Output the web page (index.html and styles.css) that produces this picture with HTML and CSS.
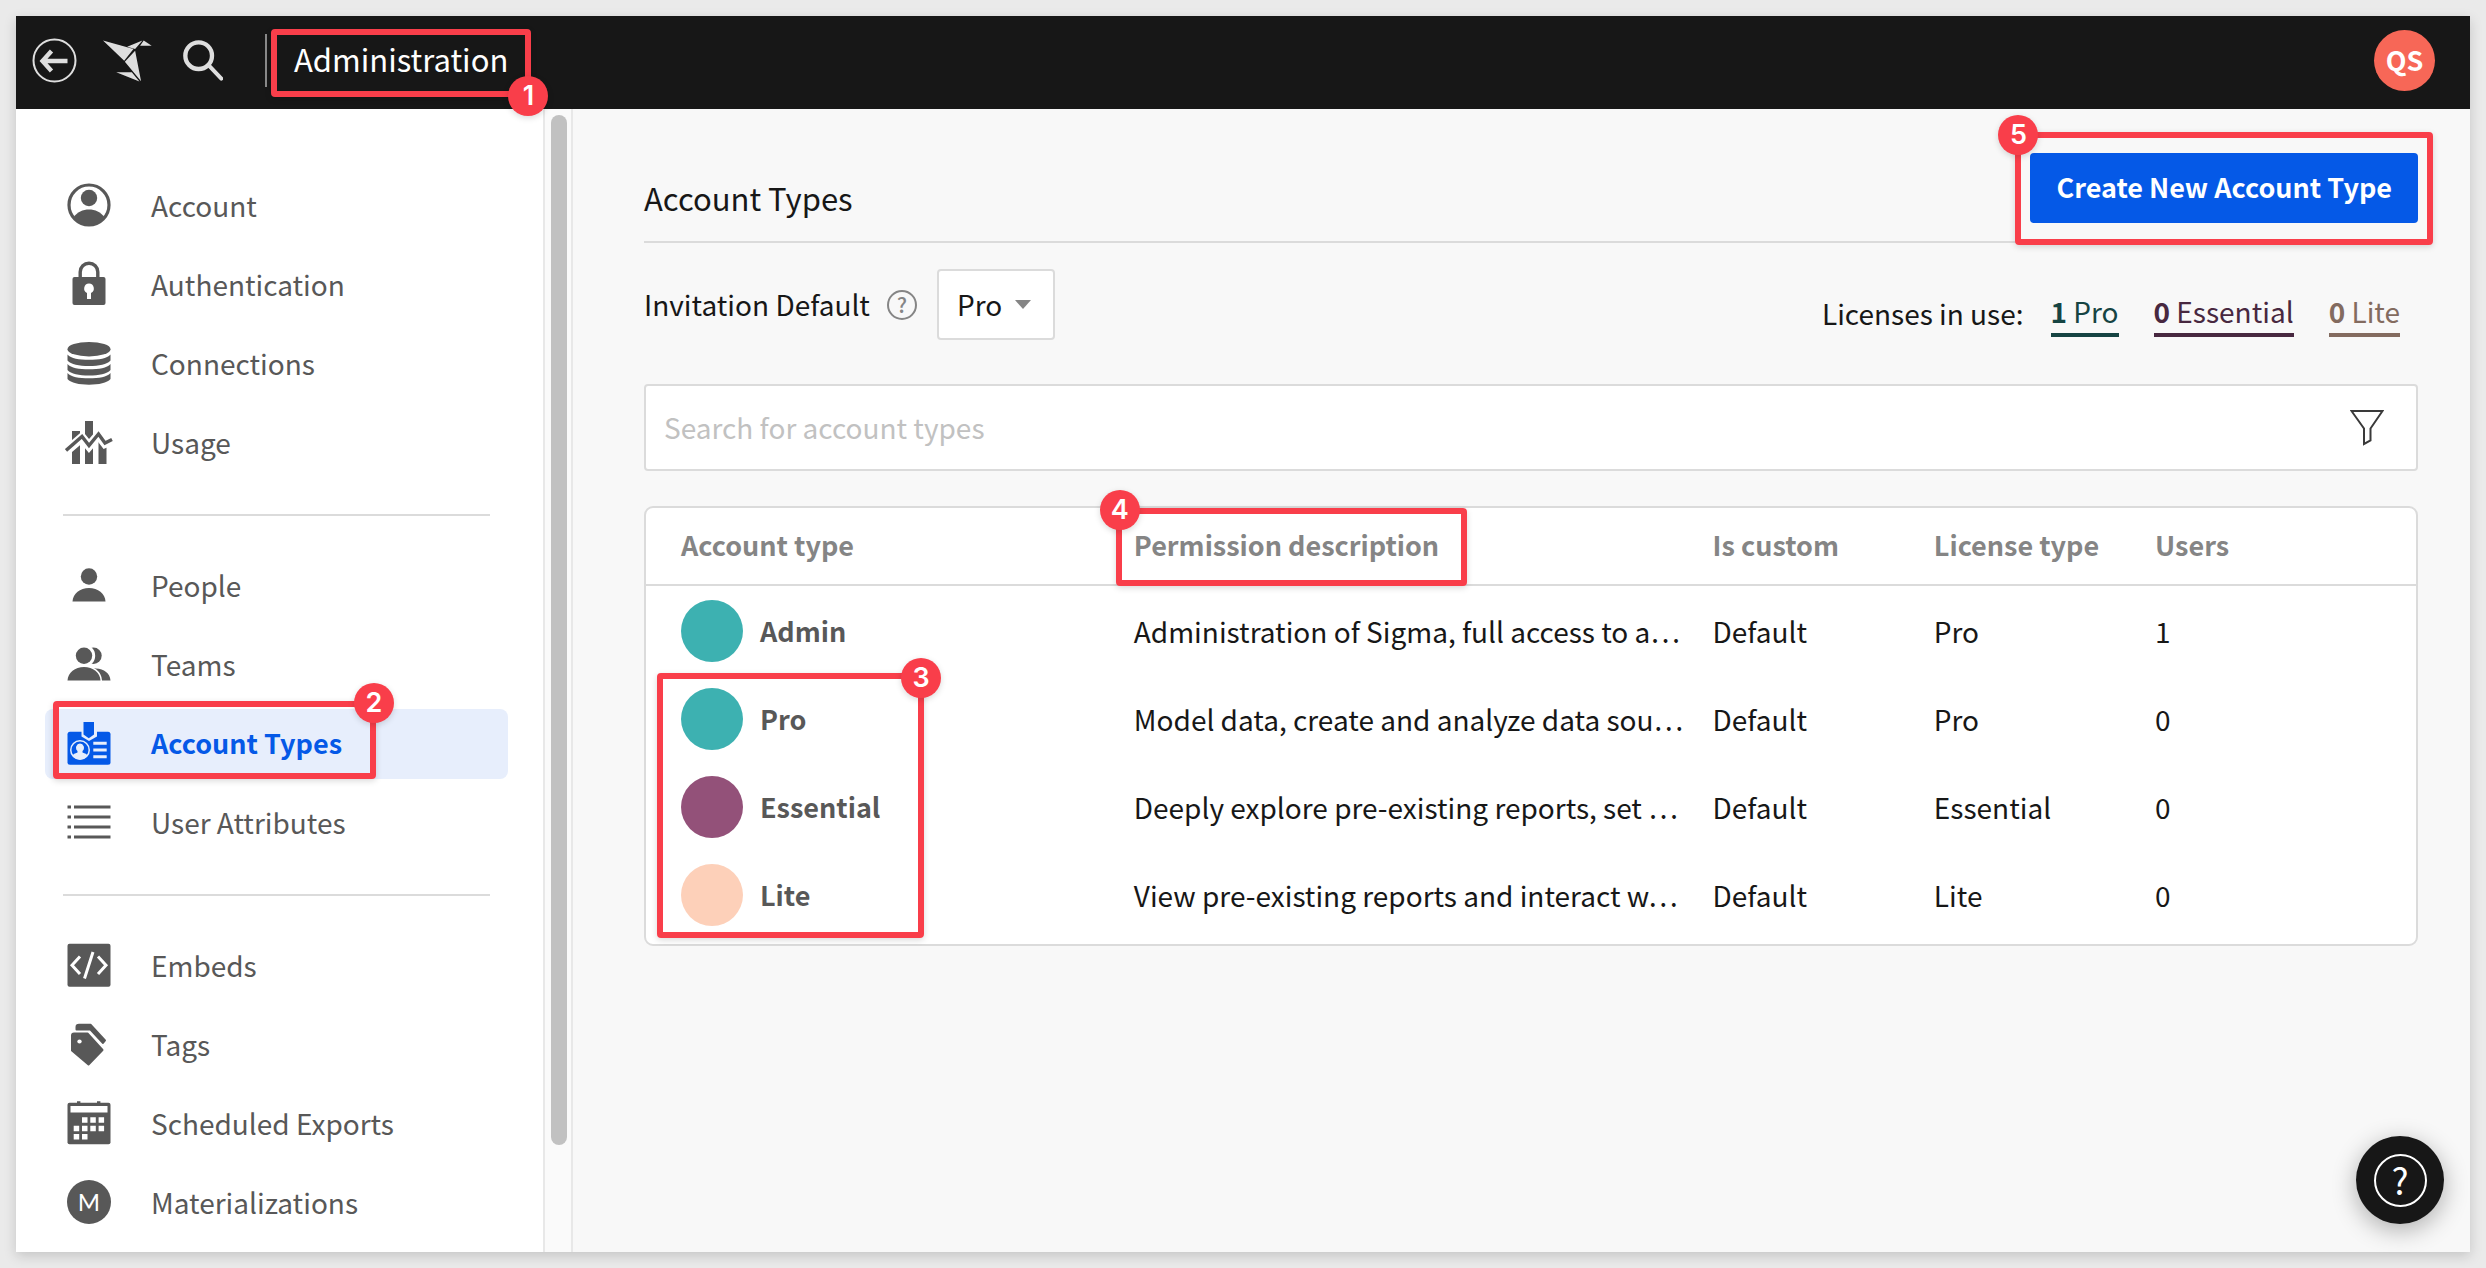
FILE: index.html
```html
<!DOCTYPE html>
<html lang="en">
<head>
<meta charset="utf-8">
<title>Account Types - Administration</title>
<link rel="stylesheet" href="styles.css">
</head>
<body>
<div class="app">
  <header class="topbar">
    <button class="icon-button back" aria-label="Back">
      <svg width="45" height="45" viewBox="0 0 45 45" fill="none" stroke="currentColor"><circle cx="22.5" cy="22.5" r="21" stroke-width="2"/><path d="M35.5 23H11M19.5 13L10.5 23 19.5 33" stroke-width="4.4"/></svg>
    </button>
    <a class="logo" href="#" aria-label="Home">
      <svg width="49" height="42" viewBox="24 30 148 126" fill="currentColor"><path d="M24 31L116 57 88 92zM97 50L143 31 121 57zM147 31L171 47 136 47zM121 62L139 154 90 95zM64 127L111 127 134 155z"/></svg>
    </a>
    <button class="icon-button search-button" aria-label="Search">
      <svg width="40" height="41" viewBox="264 30 120 123" fill="none" stroke="currentColor"><circle cx="311" cy="77" r="40" stroke-width="13"/><path d="M342 107L379 146" stroke-width="12" stroke-linecap="round"/></svg>
    </button>
    <div class="section-title">Administration
      <span class="callout callout-1"><span class="badge">1</span></span>
    </div>
    <button class="avatar">QS</button>
  </header>

  <div class="body">
    <nav class="sidebar" aria-label="Administration">
      <div class="nav-scroll">
        <ul class="nav-group">
          <li><a class="nav-item" href="#"><svg class="nav-icon" viewBox="0 0 48 48" fill="currentColor"><circle cx="24" cy="24" r="20" fill="none" stroke="currentColor" stroke-width="3.2"/><circle cx="24" cy="17" r="8.2"/><path d="M8.500 36.500C12 31 18 28.500 24 28.500S36 31 39.500 36.500A20 20 0 0 1 8.500 36.500Z"/></svg>Account</a></li>
          <li><a class="nav-item" href="#"><svg class="nav-icon" viewBox="0 0 48 48" fill="currentColor"><path d="M15.200 18V12a8.800 8.800 0 0 1 17.600 0V18" fill="none" stroke="currentColor" stroke-width="3.400"/><rect x="7.500" y="17" width="33" height="28" rx="2"/><path class="knockout" d="M24 23.500a5 5 0 0 0-2 9.500v6h4v-6a5 5 0 0 0-2-9.500z"/></svg>Authentication</a></li>
          <li><a class="nav-item" href="#"><svg class="nav-icon" viewBox="0 0 48 48" fill="currentColor"><ellipse cx="24" cy="10.200" rx="21.500" ry="7.200"/><path d="M2.500 15.500C6 19.500 14 20.800 24 20.800S42 19.500 45.500 15.500V21.500C42 25.500 34 27 24 27S6 25.500 2.500 21.500ZM2.500 25C6 29 14 30.300 24 30.300S42 29 45.500 25V31C42 35 34 36.500 24 36.500S6 35 2.500 31ZM2.500 34C6 38 14 39.300 24 39.300S42 38 45.500 34V40C42 44 34 45.700 24 45.700S6 44 2.500 40Z"/></svg>Connections</a></li>
          <li><a class="nav-item" href="#"><svg class="nav-icon" viewBox="0 0 48 48" fill="currentColor"><path d="M7 13h8v33H7zM20 3h8v43h-8zM33.500 20h8v26h-8z"/><path class="knockout-line" d="M0 34L17 19.500 24 28 33.500 17 40 25.500 48 22" stroke-width="9"/><path d="M1 32.500L17 18.500 24 27.500 33.500 16 40 25 47 21.500" fill="none" stroke="currentColor" stroke-width="3.400"/></svg>Usage</a></li>
        </ul>
        <hr class="nav-divider">
        <ul class="nav-group">
          <li><a class="nav-item" href="#"><svg class="nav-icon" viewBox="0 0 48 48" fill="currentColor"><circle cx="24" cy="15.500" r="8.200"/><path d="M7.500 40.500C8 32.500 15 27 24 27S40 32.500 40.500 40.500Z"/></svg>People</a></li>
          <li><a class="nav-item" href="#"><svg class="nav-icon" viewBox="0 0 48 48" fill="currentColor"><circle cx="28.500" cy="15.700" r="8.200"/><path d="M20 40.500C20 32 24 27 31 28.500C39 29 45 33 45.500 40.500Z"/><g class="knockout-edge"><circle cx="19" cy="15.700" r="9.700"/><path d="M2.500 40.500C3 32.500 10 27 19 27S35 32.500 35.500 40.500Z"/></g><circle cx="19" cy="15.700" r="8.200"/><path d="M2.500 40.500C3 32.500 10 27 19 27S35 32.500 35.500 40.500Z"/></svg>Teams</a></li>
          <li><a class="nav-item active" href="#" aria-current="page"><svg class="nav-icon" viewBox="0 0 48 48" fill="currentColor"><rect x="2.500" y="12.700" width="43" height="33" rx="2.500"/><path class="knockout" d="M16.500 12h15.500v5.500l-8 4.500-7.500-4.500z"/><path d="M18.500 3h10.500v12.500l-5.200 3.800-5.300-3.800z"/><circle class="knockout" cx="15" cy="31" r="10"/><circle cx="15" cy="31" r="8.500"/><path class="knockout" d="M15 24.500a4 4.300 0 0 1 2.500 7.600v1.400c2.500.8 4.500 1.800 5 3.200A9.500 9.500 0 0 1 7.500 36.700c.5-1.400 2.500-2.400 5-3.200v-1.400A4 4.300 0 0 1 15 24.500zM28.300 22.800h13.400v3H28.300zM28.300 29.500h13.400v3H28.300zM28.300 36.200h13.400v3H28.300z"/></svg>Account Types<span class="callout callout-2"><span class="badge">2</span></span></a></li>
          <li><a class="nav-item" href="#"><svg class="nav-icon" viewBox="0 0 48 48" fill="none" stroke="currentColor" stroke-width="3"><path d="M2.500 9h3.500M9 9h36.500M2.500 19h3.500M9 19h36.500M2.500 29h3.500M9 29h36.500M2.500 39h3.500M9 39h36.500"/></svg>User Attributes</a></li>
        </ul>
        <hr class="nav-divider">
        <ul class="nav-group">
          <li><a class="nav-item" href="#"><svg class="nav-icon" viewBox="0 0 48 48" fill="currentColor"><rect x="2.500" y="2.700" width="43" height="43" rx="2"/><path class="knockout-line" d="M15 15.500L7 24.200 15 33M33 15.500L41 24.200 33 33M28 11L19.500 37.500" stroke-width="3"/></svg>Embeds</a></li>
          <li><a class="nav-item" href="#"><svg class="nav-icon" viewBox="0 0 48 48" fill="currentColor" stroke="currentColor" stroke-width="2" stroke-linejoin="round"><path d="M7 15.500Q7 13.500 9 13.500H22.500L37.500 30 23.500 44.500 7 30.500zM11.500 9.500V7Q11.500 4.700 14 4.700H25.500L40 20.500 38 23 25.500 9.500z"/><ellipse class="knockout" cx="14.500" cy="21.500" rx="2.200" ry="2" stroke="none"/></svg>Tags</a></li>
          <li><a class="nav-item" href="#"><svg class="nav-icon" viewBox="0 0 48 48" fill="currentColor"><path d="M12 2.200h3.400v2H12zM32 2.200h3.400v2H32z"/><rect x="2.500" y="3.700" width="43" height="41.500" rx="2"/><path class="knockout" d="M5.500 7h37v6.500h-37zM17 18.300h5.500v5.500H17zM25.300 18.300h5.500v5.500h-5.500zM33.600 18.300h5.500v5.500h-5.500zM8.700 26.700h5.500v5.500H8.700zM17 26.700h5.500v5.500H17zM25.300 26.700h5.500v5.500h-5.500zM33.600 26.700h5.500v5.500h-5.500zM8.700 35h5.500v5.500H8.700zM17 35h5.500v5.500H17z"/></svg>Scheduled Exports</a></li>
          <li><a class="nav-item" href="#"><svg class="nav-icon" viewBox="0 0 48 48" fill="currentColor"><circle cx="24" cy="24" r="22"/><text class="icon-letter" x="24" y="32.500" text-anchor="middle">M</text></svg>Materializations</a></li>
        </ul>
      </div>
      <div class="scroll-track"><div class="scroll-thumb"></div></div>
    </nav>

    <main class="content">
      <div class="page-head">
        <h1 class="page-title">Account Types</h1>
        <button class="primary">Create New Account Type<span class="callout callout-5"><span class="badge">5</span></span></button>
      </div>

      <div class="toolbar">
        <label class="toolbar-label" for="invite">Invitation Default</label>
        <span class="hint">?</span>
        <div class="select-wrap">
          <select id="invite" class="select"><option>Pro</option></select>
        </div>
        <div class="licenses">
          <span class="licenses-label">Licenses in use:</span>
          <a class="license pro" href="#"><b>1</b> Pro</a>
          <a class="license essential" href="#"><b>0</b> Essential</a>
          <a class="license lite" href="#"><b>0</b> Lite</a>
        </div>
      </div>

      <div class="search">
        <input class="search-input" type="text" placeholder="Search for account types" aria-label="Search for account types">
        <button class="icon-button filter" aria-label="Filter">
          <svg width="34" height="37" viewBox="0 0 34 37" fill="none" stroke="currentColor" stroke-width="2"><path d="M1.500 2H32.500L20.500 19.500V31.500L14 35V19.500Z"/></svg>
        </button>
      </div>

      <div class="table-card">
        <table class="table">
          <colgroup><col class="col-name"><col class="col-desc"><col class="col-small"><col class="col-small"><col></colgroup>
          <thead>
            <tr><th>Account type</th><th><span class="marked">Permission description<span class="callout callout-4"><span class="badge">4</span></span></span></th><th>Is custom</th><th>License type</th><th>Users</th></tr>
          </thead>
          <tbody>
            <tr><td><div class="type"><span class="dot teal"></span>Admin</div></td><td>Administration of Sigma, full access to a…</td><td>Default</td><td>Pro</td><td>1</td></tr>
            <tr><td><div class="type marked"><span class="dot teal"></span>Pro<span class="callout callout-3"><span class="badge">3</span></span></div></td><td>Model data, create and analyze data sou…</td><td>Default</td><td>Pro</td><td>0</td></tr>
            <tr><td><div class="type"><span class="dot purple"></span>Essential</div></td><td>Deeply explore pre-existing reports, set …</td><td>Default</td><td>Essential</td><td>0</td></tr>
            <tr><td><div class="type"><span class="dot peach"></span>Lite</div></td><td>View pre-existing reports and interact w…</td><td>Default</td><td>Lite</td><td>0</td></tr>
          </tbody>
        </table>
      </div>
    </main>
  </div>

  <button class="help" aria-label="Help"><span class="help-mark">?</span></button>
</div>
</body>
</html>
```
FILE: styles.css
```css
* { box-sizing: border-box; }

:root {
  --ink: #171717;
  --muted: #585858;
  --line: #dbdbdb;
  --blue: #0559e7;
  --red: #f93e4a;
  --nav-bg: #ffffff;
}

body {
  margin: 0;
  min-height: 100vh;
  padding: 16px;
  display: flex;
  background: #eaeaea;
  color: var(--ink);
  font-family: "Noto Sans CJK KR", "Noto Sans", sans-serif;
  font-size: 28px;
  line-height: 40px;
}

button, input, select {
  font: inherit;
  color: inherit;
}

button {
  border: 0;
  padding: 0;
  background: none;
}

a {
  color: inherit;
  text-decoration: none;
}

.app {
  position: relative;
  flex: 1;
  display: flex;
  flex-direction: column;
  background: #f8f8f8;
  box-shadow: 0 4px 12px rgba(0, 0, 0, 0.16);
}

/* Top bar */
.topbar {
  display: flex;
  align-items: center;
  height: 93px;
  padding: 0 35px 4px 16px;
  background: var(--ink);
  color: #dedede;
}

.topbar svg { display: block; }
.logo { margin-left: 26px; }
.search-button { margin: 0 42px 0 31px; }

.section-title {
  position: relative;
  padding: 5px 16px 8px 27px;
  border-left: 2px solid #8a8a8a;
  color: #ffffff;
  font-size: 31px;
}

.avatar {
  width: 61px;
  height: 61px;
  margin-left: auto;
  padding-bottom: 2px;
  border-radius: 50%;
  background: #f76757;
  color: #ffffff;
  font-size: 27px;
  font-weight: 700;
}

/* Sidebar */
.body {
  flex: 1;
  display: flex;
}

.sidebar {
  flex: none;
  display: flex;
  width: 557px;
  background: var(--nav-bg);
  color: var(--muted);
}

.nav-scroll {
  flex: 1;
  padding: 62px 35px 12px 29px;
}

.nav-group {
  display: grid;
  gap: 9px;
  margin: 0;
  padding: 0;
  list-style: none;
}

.nav-item {
  position: relative;
  display: flex;
  align-items: center;
  gap: 38px;
  height: 70px;
  padding: 0 0 2px 20px;
  border-radius: 8px;
}

.nav-item.active {
  --nav-bg: #e7eefc;
  background: var(--nav-bg);
  color: var(--blue);
  font-size: 27px;
  font-weight: 700;
}

.nav-icon {
  flex: none;
  width: 48px;
  height: 48px;
}

.knockout { fill: var(--nav-bg); }
.knockout-line { fill: none; stroke: var(--nav-bg); }
.knockout-edge { fill: var(--nav-bg); stroke: var(--nav-bg); stroke-width: 3px; }
.icon-letter { fill: #ffffff; font-family: Lato, sans-serif; font-size: 24px; }

.nav-divider {
  height: 2px;
  margin: 36px 18px 35px;
  border: 0;
  background: var(--line);
}

.scroll-track {
  width: 30px;
  padding: 6px 0 0 6px;
  border: solid #e8e8e8;
  border-width: 0 2px;
  background: #fafafa;
}

.scroll-thumb {
  width: 16px;
  height: 90.6%;
  border-radius: 8px;
  background: #c1c1c1;
}

/* Main column */
.content {
  flex: 1;
  min-width: 0;
  padding: 44px 52px 44px 71px;
}

.page-head {
  display: flex;
  align-items: flex-end;
  justify-content: space-between;
  padding-bottom: 18px;
  border-bottom: 2px solid var(--line);
}

.page-title {
  margin: 0;
  padding-bottom: 5px;
  font-size: 31px;
  font-weight: 400;
}

.primary {
  position: relative;
  height: 70px;
  padding: 0 26px 2px;
  border-radius: 4px;
  background: var(--blue);
  color: #ffffff;
  font-size: 27px;
  font-weight: 700;
}

.toolbar {
  display: flex;
  align-items: center;
  margin: 26px 0 44px;
}

.toolbar-label { padding-bottom: 2px; }

.hint {
  width: 30px;
  height: 30px;
  margin: 0 20px 0 17px;
  border: 2px solid;
  border-radius: 50%;
  color: #858585;
  font-size: 21px;
  font-weight: 500;
  line-height: 24px;
  text-align: center;
}

.select-wrap {
  position: relative;
}

.select-wrap::after {
  content: "";
  position: absolute;
  top: 31px;
  right: 24px;
  border: solid transparent;
  border-width: 9px 8px 0;
  border-top-color: #858585;
  pointer-events: none;
}

.select {
  display: block;
  width: 118px;
  height: 71px;
  padding: 0 18px 2px;
  border: 2px solid var(--line);
  border-radius: 4px;
  background: #ffffff;
  appearance: none;
}

.licenses {
  display: flex;
  align-items: flex-end;
  align-self: flex-end;
  gap: 35px;
  margin-left: auto;
  padding: 0 18px 3px 0;
}

.licenses-label {
  margin-right: -8px;
  padding-bottom: 4px;
}

.license {
  padding-bottom: 2px;
  border-bottom: 4px solid;
}

.license b { font-weight: 700; }
.pro { color: #164443; }
.essential { color: #482840; }
.lite { color: #836b5f; }

.search {
  display: flex;
  align-items: center;
  height: 87px;
  padding-right: 32px;
  border: 2px solid var(--line);
  border-radius: 4px;
  background: #ffffff;
}

.search-input {
  flex: 1;
  height: 100%;
  padding: 0 18px 2px;
  border: 0;
  background: none;
}

.search-input::placeholder { color: #c1c1c1; }
.filter svg { display: block; color: #3a3a3a; }

/* Table */
.table-card {
  margin-top: 35px;
  padding-bottom: 6px;
  border: 2px solid var(--line);
  border-radius: 9px;
  background: #ffffff;
}

.table {
  width: 100%;
  table-layout: fixed;
  border-collapse: separate;
  border-spacing: 0;
}

.col-name { width: 26.6%; }
.col-desc { width: 32.7%; }
.col-small { width: 12.5%; }

.table th {
  height: 78px;
  padding: 0 17px 2px;
  border-bottom: 2px solid var(--line);
  color: #858585;
  font-size: 27px;
  font-weight: 700;
  text-align: left;
}

.table td {
  height: 88px;
  padding: 2px 17px 0;
  white-space: nowrap;
}

.table th:first-child,
.table td:first-child { padding-left: 35px; }

.marked { position: relative; }

.type {
  display: flex;
  align-items: center;
  gap: 17px;
  color: var(--muted);
  font-size: 27px;
  font-weight: 700;
}

.dot {
  width: 62px;
  height: 62px;
  border-radius: 50%;
}

.teal { background: #3db1b1; }
.purple { background: #935179; }
.peach { background: #fdd0b9; }

/* Numbered callouts laid over the interface */
.callout {
  position: absolute;
  z-index: 1;
  border: 6px solid var(--red);
  border-radius: 4px;
  box-shadow: 0 2px 6px rgba(0, 0, 0, 0.15);
  pointer-events: none;
}

.badge {
  position: absolute;
  width: 40px;
  height: 40px;
  border-radius: 50%;
  background: var(--red);
  box-shadow: 0 2px 6px rgba(0, 0, 0, 0.15);
  color: #ffffff;
  font: 600 27px/40px Inter, sans-serif;
  text-align: center;
}

.callout-1 { inset: -5px -7px -10px 4px; }
.callout-1 .badge { right: -23px; bottom: -25px; }
.callout-2 { left: 8px; top: -8px; width: 323px; height: 78px; }
.callout-2 .badge { right: -24px; top: -24px; }
.callout-3 { left: -24px; top: -15px; width: 267px; height: 265px; }
.callout-3 .badge { right: -23px; top: -21px; }
.callout-4 { left: -18px; top: -17px; width: 351px; height: 78px; }
.callout-4 .badge { left: -22px; top: -24px; }
.callout-5 { inset: -21px -15px -22px -15px; }
.callout-5 .badge { left: -23px; top: -23px; }

/* Floating help */
.help {
  position: absolute;
  right: 26px;
  bottom: 28px;
  display: grid;
  place-items: center;
  width: 88px;
  height: 88px;
  border-radius: 50%;
  background: var(--ink);
  box-shadow: 0 6px 24px rgba(0, 0, 0, 0.3);
  color: #ffffff;
}

.help-mark {
  width: 53px;
  height: 53px;
  border: 2px solid;
  border-radius: 50%;
  font-size: 36px;
  line-height: 47px;
}
```
